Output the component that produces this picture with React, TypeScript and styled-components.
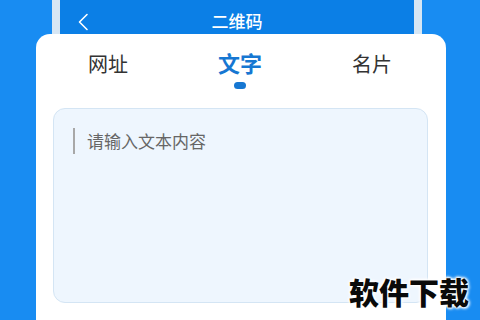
import React, { useState } from "react";
import styled, { createGlobalStyle } from "styled-components";

const GlobalStyle = createGlobalStyle`
  html, body {
    margin: 0;
    padding: 0;
  }
  body {
    font-family: "Noto Sans CJK SC", "Noto Sans", sans-serif;
  }
`;

const Screen = styled.div`
  position: relative;
  width: 480px;
  height: 320px;
  overflow: hidden;
  background-color: #188cf2;
  display: flex;
  flex-direction: column;
`;

const PhoneTop = styled.div`
  margin-left: 52px;
  width: 370px;
  height: 34px;
  padding: 0 8px;
  box-sizing: border-box;
  background-color: #d6e6f4;
  flex-shrink: 0;
`;

const HeaderBar = styled.div`
  height: 44px;
  background-color: #0b7fe6;
  display: grid;
  grid-template-columns: 40px 1fr 40px;
  align-items: start;
  color: #fff;
`;

const BackButton = styled.div`
  padding: 13px 0 0 17px;
  display: flex;
`;

const Title = styled.h1`
  margin: 0;
  padding-top: 10px;
  text-align: center;
  font-size: 17px;
  font-weight: 500;
  line-height: 22px;
`;

const Card = styled.div`
  position: relative;
  z-index: 1;
  margin-left: 36px;
  width: 410px;
  height: 300px;
  background-color: #fff;
  border-radius: 14px;
  flex-shrink: 0;
`;

const Tabs = styled.div`
  display: grid;
  grid-template-columns: repeat(3, 132px);
  padding: 15px 0 0 6px;
  height: 59px;
`;

const Tab = styled.div<{ active?: boolean }>`
  display: flex;
  flex-direction: column;
  align-items: center;
  color: ${(p) => (p.active ? "#1677d2" : "#333")};
  font-size: ${(p) => (p.active ? "22px" : "20px")};
  font-weight: ${(p) => (p.active ? 700 : 400)};
  line-height: 30px;
  margin-top: ${(p) => (p.active ? "-2px" : "0")};
  cursor: pointer;
`;

const Dot = styled.span`
  margin-top: 5px;
  width: 12px;
  height: 7px;
  border-radius: 4px;
  background-color: #1677d2;
`;

const InputBox = styled.div`
  margin-left: 17px;
  width: 375px;
  height: 195px;
  box-sizing: border-box;
  background-color: #eef6fe;
  border: 1px solid #d4e5f4;
  border-radius: 12px;
  padding: 19px 0 0 19px;
`;

const InputRow = styled.div`
  display: flex;
  align-items: center;
  gap: 12px;
`;

const Caret = styled.span`
  width: 2px;
  height: 26px;
  background-color: #a8a8a8;
`;

const Placeholder = styled.span`
  color: #666;
  font-size: 17px;
  line-height: 26px;
`;

const Watermark = styled.div`
  position: absolute;
  right: 11px;
  bottom: 7px;
  z-index: 2;
  color: #0a0a0a;
  font-size: 30px;
  font-weight: 900;
  text-shadow: 0 0 2px #fff, 0 0 3px #fff, 0 0 4px #fff, 1px 1px 3px #fff, -1px -1px 3px #fff;
`;

const tabs = ["网址", "文字", "名片"];

const App: React.FC = () => {
  const [active, setActive] = useState(1);

  return (
    <Screen>
      <GlobalStyle />
      <PhoneTop>
        <HeaderBar>
          <BackButton>
            <svg width="12" height="18" viewBox="0 0 12 18" fill="none">
              <polyline
                points="10,1.5 2.5,9 10,16.5"
                stroke="#fff"
                strokeWidth="1.6"
                strokeLinecap="round"
                strokeLinejoin="round"
              />
            </svg>
          </BackButton>
          <Title>二维码</Title>
        </HeaderBar>
      </PhoneTop>
      <Card>
        <Tabs>
          {tabs.map((t, i) => (
            <Tab key={t} active={i === active} onClick={() => setActive(i)}>
              {t}
              {i === active && <Dot />}
            </Tab>
          ))}
        </Tabs>
        <InputBox>
          <InputRow>
            <Caret />
            <Placeholder>请输入文本内容</Placeholder>
          </InputRow>
        </InputBox>
      </Card>
      <Watermark>软件下载</Watermark>
    </Screen>
  );
};

export default App;
